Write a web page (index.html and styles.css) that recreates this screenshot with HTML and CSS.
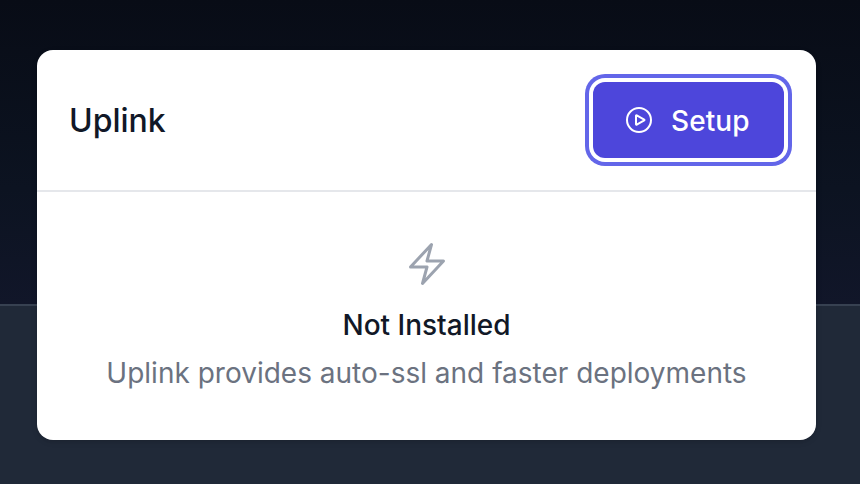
FILE: index.html
```html
<!DOCTYPE html>
<html lang="en">
<head>
<meta charset="utf-8">
<title>Uplink</title>
<link rel="stylesheet" href="styles.css">
</head>
<body>
<main class="page">
  <section class="card">
    <header class="card-header">
      <h2 class="card-title">Uplink</h2>
      <button class="setup" type="button">
        <svg class="setup-icon" viewBox="0 0 24 24" fill="none" stroke="currentColor" stroke-width="1.5" stroke-linecap="round" stroke-linejoin="round"><path d="M21 12a9 9 0 1 1-18 0 9 9 0 0 1 18 0Z"/><path d="M15.91 11.672a.375.375 0 0 1 0 .656l-5.603 3.113a.375.375 0 0 1-.557-.328V8.887c0-.286.307-.466.557-.327l5.603 3.112Z"/></svg>
        <span class="setup-label">Setup</span>
      </button>
    </header>
    <div class="empty">
      <svg class="bolt" viewBox="0 0 24 24" fill="none" stroke="currentColor" stroke-width="1.5" stroke-linecap="round" stroke-linejoin="round"><path d="m3.75 13.5 10.5-11.25L12 10.5h8.25L9.75 21.75 12 13.5H3.75Z"/></svg>
      <h3 class="empty-title">Not Installed</h3>
      <p class="empty-text">Uplink provides auto-ssl and faster deployments</p>
    </div>
  </section>
</main>
</body>
</html>
```
FILE: styles.css
```css
* { box-sizing: border-box; }
body { margin: 0; font-family: Inter, sans-serif; color: #111827; }
.page {
  height: 484px;
  padding: 50px 44px 44px 37px;
  background: linear-gradient(#080c16, #0c1321 62%, #111629) 0 0 / 100% 304px no-repeat,
    linear-gradient(#374151, #374151) 0 304px / 100% 2px no-repeat, #202938;
}
.card {
  height: 390px;
  border-radius: 16px;
  background: #fff;
  box-shadow: 0 2px 6px rgb(0 0 0 / 0.1), 0 2px 4px -2px rgb(0 0 0 / 0.1);
}
.card-header {
  display: flex;
  align-items: center;
  justify-content: space-between;
  height: 142px;
  padding: 0 32px;
  border-bottom: 2px solid #e5e7eb;
}
.card-title { margin: 0; padding-top: 2px; font-size: 32px; line-height: 48px; font-weight: 500; }
.setup {
  display: flex;
  align-items: center;
  gap: 16px;
  width: 191px;
  height: 76px;
  padding: 0 30px;
  border: 0;
  border-radius: 12px;
  background: #4d46db;
  color: #fff;
  font: 500 28px/40px Inter, sans-serif;
  box-shadow: 0 0 0 4px #fff, 0 0 0 8px #6366e9;
}
.setup-icon { width: 32px; height: 32px; flex: none; }
.setup-label { padding-top: 2px; letter-spacing: 0.1px; }
.empty { display: flex; flex-direction: column; align-items: center; padding-top: 48px; }
.bolt { width: 48px; height: 48px; color: #9ca3af; }
.empty-title { margin: 17px 0 0; font-size: 28px; line-height: 40px; font-weight: 500; }
.empty-text { margin: 8px 0 0; font-size: 28px; line-height: 40px; color: #6b7280; white-space: nowrap; }
```
